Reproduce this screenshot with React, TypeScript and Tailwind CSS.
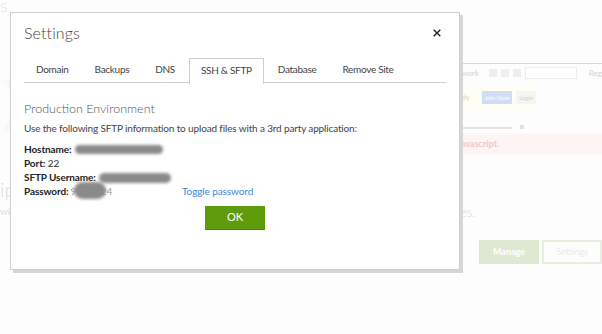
import React from "react";

function Blob({ className }: { className: string }) {
  return <span className={"absolute rounded-full bg-[#8a8a8a] blur-[1.5px] " + className} />;
}

export default function App() {
  return (
    <div
      className="relative w-[602px] h-[334px] overflow-hidden bg-[#fdfdfd]"
      style={{ fontFamily: "Lato, 'Open Sans', 'Noto Sans', sans-serif" }}
    >
      {/* faded page underneath */}
      <div className="absolute inset-0 text-[#c9c9c9]">
        <div className="absolute left-[0px] top-[-8px] text-[18px] font-light text-[#e4e4e4]">s</div>
        <div className="absolute left-[-20px] top-[80px] w-[40px] h-[50px] rounded-full border-r-[6px] border-[#e6e6e6] blur-[2px]" />
        <div className="absolute left-[0px] top-[174px] text-[20px] font-light text-[#dadada]">ip</div>
        <div className="absolute left-[0px] top-[204px] text-[10px] text-[#dcdcdc]">wi</div>
        <div className="absolute left-[460px] top-[63px] w-[142px] h-px bg-[#d8d8d8]" />
        <div className="absolute left-[452px] top-[67px] flex items-center gap-[4px] text-[8px] text-[#d2d2d2] whitespace-nowrap">
          <span className="mr-[6px]">ur work</span>
          <span className="w-[8px] h-[8px] bg-[#efefef]" />
          <span className="w-[8px] h-[8px] bg-[#efefef]" />
          <span className="w-[8px] h-[8px] bg-[#efefef]" />
          <span className="w-[52px] h-[12px] border border-[#ececec] bg-white" />
          <span className="ml-[8px]">Regis</span>
        </div>
        <div className="absolute left-[460px] top-[85px] w-[76px] h-[25px] bg-[#fefef4] flex items-center gap-[4px] pl-[2px] text-[6px] whitespace-nowrap">
          <span className="text-[#d2d2d2] mr-[8px] text-[7px]">dy</span>
          <span className="px-[3px] py-[2px] bg-[#d3dcf5] text-white">Join Now</span>
          <span className="px-[3px] py-[2px] bg-[#f5f5f5] text-[#d2d2d2]">Login</span>
        </div>
        <div className="absolute left-[460px] top-[127px] w-[52px] h-[2px] bg-[#e2e2e2]" />
        <div className="absolute left-[520px] top-[125px] w-[4px] h-[4px] bg-[#e2e2e2]" />
        <div className="absolute left-[460px] top-[133px] w-[142px] h-[22px] bg-[#fdf4f4] flex items-center pl-[1px] text-[9px] font-bold text-[#f0c6c6]">
          avascript.
        </div>
        <div className="absolute left-[460px] top-[203px] text-[13px] font-light text-[#d6d6d6]">es.</div>
        <div className="absolute left-[479px] top-[240px] w-[60px] h-[24px] bg-[#dfe9d1] flex items-center justify-center text-[9px] text-white font-bold">
          Manage
        </div>
        <div className="absolute left-[542px] top-[240px] w-[60px] h-[24px] border-2 border-[#e7eedd] flex items-center justify-center text-[9px] text-[#eaeaea]">
          Settings
        </div>
      </div>

      {/* modal */}
      <div className="absolute left-[10px] top-[12px] w-[450px] h-[258px] bg-white border border-[#cfcfcf] shadow-[3px_3px_0_#d6d6d6] px-[13px] text-[#333]">
        <div className="flex items-start justify-between pt-[9px]">
          <h1 className="text-[16px] font-light text-[#444] leading-[22px] tracking-[0.1px]">Settings</h1>
          <button className="mt-[7px] mr-[5px] text-[#222]">
            <svg width="8" height="8" viewBox="0 0 8 8">
              <path d="M0.7 0.7L7.3 7.3M7.3 0.7L0.7 7.3" stroke="#222" strokeWidth="1.4" />
            </svg>
          </button>
        </div>

        <div className="mt-[14px] flex border-b border-[#cfcfcf] h-[25px] text-[10px] tracking-[-0.3px] text-[#444]">
          {["Domain", "Backups", "DNS", "SSH & SFTP", "Database", "Remove Site"].map((t) => (
            <div
              key={t}
              className={
                t === "SSH & SFTP"
                  ? "mr-[2px] px-[11px] pb-[2px] flex items-center border border-b-0 border-[#cfcfcf] bg-white -mb-px h-[26px]"
                  : "mr-[2px] px-[12px] pb-[2px] flex items-center"
              }
            >
              {t}
            </div>
          ))}
        </div>

        <div className="mt-[18px] text-[12.5px] font-light text-[#555] leading-[16px]">Production Environment</div>
        <div className="mt-[4px] text-[10px] tracking-[-0.15px] text-[#444] leading-[14px]">
          Use the following SFTP information to upload files with a 3rd party application:
        </div>

        <div className="mt-[7px] text-[10px] tracking-[-0.1px] text-[#333] leading-[14px]">
          <div className="flex">
            <span className="font-bold text-[#222]">Hostname:</span>
            <span className="relative ml-[3px] w-[88px]">
              <Blob className="left-0 top-[3px] w-[88px] h-[9px]" />
            </span>
          </div>
          <div>
            <span className="font-bold text-[#222]">Port:</span> 22
          </div>
          <div className="flex">
            <span className="font-bold text-[#222]">SFTP Username:</span>
            <span className="relative ml-[3px] w-[72px]">
              <Blob className="left-0 top-[3px] w-[72px] h-[10px]" />
            </span>
          </div>
          <div className="flex">
            <span className="w-[158px] flex">
              <span className="font-bold text-[#222]">Password:</span>
              <span className="relative ml-[2px] w-[42px] text-[#999]">
                9&nbsp;&nbsp;&nbsp;&nbsp;&nbsp;&nbsp;&nbsp;&nbsp;&nbsp;&nbsp;24
                <Blob className="left-[3px] top-[-2px] w-[32px] h-[17px]" />
              </span>
            </span>
            <a className="text-[#3b86d8]">Toggle password</a>
          </div>
        </div>

        <div className="mt-[8px] flex justify-center">
          <button className="w-[60px] h-[24px] bg-[#5f9b0a] border-b border-[#4f8405] text-white text-[11px]">OK</button>
        </div>
      </div>
    </div>
  );
}
